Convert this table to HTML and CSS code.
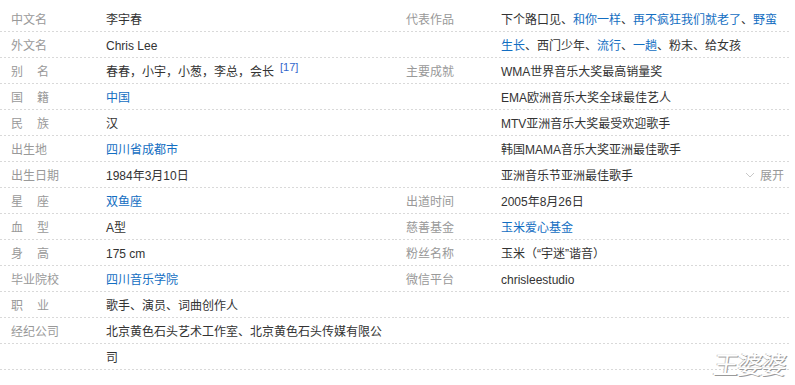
FILE: index.html
```html
<!DOCTYPE html>
<html lang="zh-CN">
<head>
<meta charset="utf-8">
<title>李宇春 基本信息</title>
<link rel="stylesheet" href="styles.css">
</head>
<body>
<div class="basic-info">
  <div class="col">
    <div class="row"><div class="name">中文名</div><div class="value">李宇春</div></div>
    <div class="row"><div class="name">外文名</div><div class="value">Chris Lee</div></div>
    <div class="row"><div class="name two">别名</div><div class="value">春春，小宇，小葱，李总，会长<sup class="ref">[17]</sup></div></div>
    <div class="row"><div class="name two">国籍</div><div class="value"><a class="link">中国</a></div></div>
    <div class="row"><div class="name two">民族</div><div class="value">汉</div></div>
    <div class="row"><div class="name">出生地</div><div class="value"><a class="link">四川省成都市</a></div></div>
    <div class="row"><div class="name">出生日期</div><div class="value">1984年3月10日</div></div>
    <div class="row"><div class="name two">星座</div><div class="value"><a class="link">双鱼座</a></div></div>
    <div class="row"><div class="name two">血型</div><div class="value">A型</div></div>
    <div class="row"><div class="name two">身高</div><div class="value">175 cm</div></div>
    <div class="row"><div class="name">毕业院校</div><div class="value"><a class="link">四川音乐学院</a></div></div>
    <div class="row"><div class="name two">职业</div><div class="value">歌手、演员、词曲创作人</div></div>
    <div class="row"><div class="name">经纪公司</div><div class="value">北京黄色石头艺术工作室、北京黄色石头传媒有限公</div></div>
    <div class="row"><div class="name"></div><div class="value">司</div></div>
  </div>
  <div class="col">
    <div class="row"><div class="name">代表作品</div><div class="value">下个路口见、<a class="link">和你一样</a>、<a class="link">再不疯狂我们就老了</a>、<a class="link">野蛮</a></div></div>
    <div class="row"><div class="name"></div><div class="value"><a class="link">生长</a>、西门少年、<a class="link">流行</a>、<a class="link">一趟</a>、粉末、给女孩</div></div>
    <div class="row"><div class="name">主要成就</div><div class="value">WMA世界音乐大奖最高销量奖</div></div>
    <div class="row"><div class="name"></div><div class="value">EMA欧洲音乐大奖全球最佳艺人</div></div>
    <div class="row"><div class="name"></div><div class="value">MTV亚洲音乐大奖最受欢迎歌手</div></div>
    <div class="row"><div class="name"></div><div class="value">韩国MAMA音乐大奖亚洲最佳歌手</div></div>
    <div class="row"><div class="name"></div><div class="value">亚洲音乐节亚洲最佳歌手<span class="toggle"><svg class="chev" width="10" height="6" viewBox="0 0 10 6"><path d="M1 1 L5 5 L9 1" fill="none" stroke="#c8c8c8" stroke-width="1"/></svg>展开</span></div></div>
    <div class="row"><div class="name">出道时间</div><div class="value">2005年8月26日</div></div>
    <div class="row"><div class="name">慈善基金</div><div class="value"><a class="link">玉米爱心基金</a></div></div>
    <div class="row"><div class="name">粉丝名称</div><div class="value">玉米（“宇迷”谐音）</div></div>
    <div class="row"><div class="name">微信平台</div><div class="value">chrisleestudio</div></div>
    <div class="row"><div class="name"></div><div class="value"></div></div>
    <div class="row"><div class="name"></div><div class="value"></div></div>
    <div class="row"><div class="name"></div><div class="value"></div></div>
  </div>
  <div class="watermark">王婆婆</div>
</div>
</body>
</html>
```

FILE: styles.css
```css
html, body {
  margin: 0;
  padding: 0;
  background: #fff;
}
body {
  font-family: "Liberation Sans", Arial, "Noto Sans CJK SC", sans-serif;
  font-size: 12px;
  color: #333;
}
.basic-info {
  position: relative;
  display: grid;
  grid-template-columns: 395px 395px;
  padding-top: 6px;
  width: 790px;
  height: 379px;
}
.col {
  display: flex;
  flex-direction: column;
}
.row {
  display: flex;
  height: 26px;
  line-height: 28px;
  background-image: linear-gradient(to right, #d9d9d9 50%, transparent 50%);
  background-size: 4px 1px;
  background-repeat: repeat-x;
  background-position: left bottom;
}
.name {
  width: 95px;
  padding-left: 11px;
  color: #999;
  white-space: nowrap;
  flex: none;
}
.name.two {
  letter-spacing: 14px;
}
.value {
  flex: 1;
  white-space: nowrap;
  position: relative;
}
.link {
  color: #136ec2;
  text-decoration: none;
}
.ref {
  color: #3366cc;
  font-size: 11px;
  margin-left: 6px;
  vertical-align: 5px;
  line-height: 1;
}
.toggle {
  position: absolute;
  right: 6px;
  top: 0;
  color: #999;
  font-size: 12px;
}
.chev {
  margin-right: 5px;
  vertical-align: 2px;
}
.watermark {
  position: absolute;
  right: 4px;
  bottom: 9px;
  font-family: "Noto Sans CJK SC", sans-serif;
  font-size: 25px;
  transform: skewX(-8deg);
  letter-spacing: -1px;
  color: #fff;
  text-shadow: 1px 1px 0 #999, -1px 0 0 #c8c8c8;
  line-height: 1;
}
```
